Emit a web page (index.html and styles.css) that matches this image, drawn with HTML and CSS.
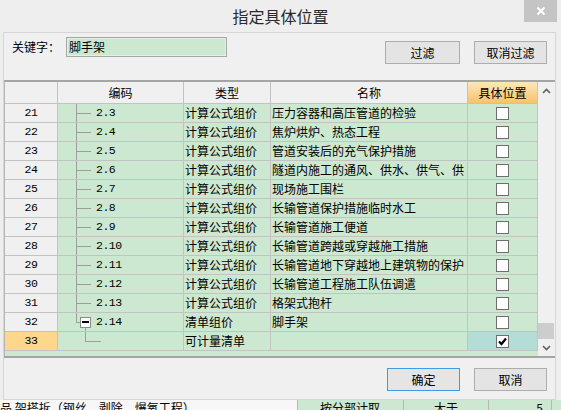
FILE: index.html
```html
<!DOCTYPE html>
<html lang="zh">
<head>
<meta charset="utf-8">
<title>指定具体位置</title>
<link rel="stylesheet" href="styles.css">
</head>
<body>
<div class="window">
  <div class="titlebar">
    <span class="title">指定具体位置</span>
    <span class="close">
      <svg width="10" height="10" viewBox="0 0 10 10"><path d="M1.5 1.5 L8.5 8.5 M8.5 1.5 L1.5 8.5" stroke="#fff" stroke-width="2" fill="none"/></svg>
    </span>
  </div>
  <div class="panel">
    <div class="toolbar">
      <span class="kw-label">关键字：</span>
      <div class="kw-input">脚手架</div>
      <button class="btn btn-filter">过滤</button>
      <button class="btn btn-clear">取消过滤</button>
    </div>
    <div class="grid">
      <div class="table">
        <div class="row head">
          <div class="cell num"></div>
          <div class="cell">编码</div>
          <div class="cell">类型</div>
          <div class="cell">名称</div>
          <div class="cell pos-head">具体位置</div>
        </div>
        <div class="row"><div class="cell num">21</div><div class="cell code tree-mid"><span class="code-text">2.3</span></div><div class="cell type">计算公式组价</div><div class="cell name">压力容器和高压管道的检验</div><div class="cell pos"><span class="chk"></span></div></div>
        <div class="row"><div class="cell num">22</div><div class="cell code tree-mid"><span class="code-text">2.4</span></div><div class="cell type">计算公式组价</div><div class="cell name">焦炉烘炉、热态工程</div><div class="cell pos"><span class="chk"></span></div></div>
        <div class="row"><div class="cell num">23</div><div class="cell code tree-mid"><span class="code-text">2.5</span></div><div class="cell type">计算公式组价</div><div class="cell name">管道安装后的充气保护措施</div><div class="cell pos"><span class="chk"></span></div></div>
        <div class="row"><div class="cell num">24</div><div class="cell code tree-mid"><span class="code-text">2.6</span></div><div class="cell type">计算公式组价</div><div class="cell name">隧道内施工的通风、供水、供气、供</div><div class="cell pos"><span class="chk"></span></div></div>
        <div class="row"><div class="cell num">25</div><div class="cell code tree-mid"><span class="code-text">2.7</span></div><div class="cell type">计算公式组价</div><div class="cell name">现场施工围栏</div><div class="cell pos"><span class="chk"></span></div></div>
        <div class="row"><div class="cell num">26</div><div class="cell code tree-mid"><span class="code-text">2.8</span></div><div class="cell type">计算公式组价</div><div class="cell name">长输管道保护措施临时水工</div><div class="cell pos"><span class="chk"></span></div></div>
        <div class="row"><div class="cell num">27</div><div class="cell code tree-mid"><span class="code-text">2.9</span></div><div class="cell type">计算公式组价</div><div class="cell name">长输管道施工便道</div><div class="cell pos"><span class="chk"></span></div></div>
        <div class="row"><div class="cell num">28</div><div class="cell code tree-mid"><span class="code-text">2.10</span></div><div class="cell type">计算公式组价</div><div class="cell name">长输管道跨越或穿越施工措施</div><div class="cell pos"><span class="chk"></span></div></div>
        <div class="row"><div class="cell num">29</div><div class="cell code tree-mid"><span class="code-text">2.11</span></div><div class="cell type">计算公式组价</div><div class="cell name">长输管道地下穿越地上建筑物的保护</div><div class="cell pos"><span class="chk"></span></div></div>
        <div class="row"><div class="cell num">30</div><div class="cell code tree-mid"><span class="code-text">2.12</span></div><div class="cell type">计算公式组价</div><div class="cell name">长输管道工程施工队伍调遣</div><div class="cell pos"><span class="chk"></span></div></div>
        <div class="row"><div class="cell num">31</div><div class="cell code tree-mid"><span class="code-text">2.13</span></div><div class="cell type">计算公式组价</div><div class="cell name">格架式抱杆</div><div class="cell pos"><span class="chk"></span></div></div>
        <div class="row"><div class="cell num">32</div><div class="cell code tree-last"><span class="toggle"></span><span class="code-text">2.14</span></div><div class="cell type">清单组价</div><div class="cell name">脚手架</div><div class="cell pos"><span class="chk"></span></div></div>
        <div class="row current"><div class="cell num">33</div><div class="cell code tree-child"></div><div class="cell type">可计量清单</div><div class="cell name"></div><div class="cell pos"><span class="chk checked"><svg width="11" height="11" viewBox="0 0 11 11"><path d="M2 5.5 L4.5 8 L9 2.5" stroke="#000" stroke-width="2.2" fill="none"/></svg></span></div></div>
        <div class="filler"></div>
      </div>
      <div class="scrollbar">
        <div class="sb-btn"><svg width="9" height="6" viewBox="0 0 9 6"><path d="M1 5 L4.5 1.5 L8 5" stroke="#606060" stroke-width="1.6" fill="none"/></svg></div>
        <div class="sb-track"></div>
        <div class="sb-thumb"></div>
        <div class="sb-btn"><svg width="9" height="6" viewBox="0 0 9 6"><path d="M1 1 L4.5 4.5 L8 1" stroke="#606060" stroke-width="1.6" fill="none"/></svg></div>
      </div>
    </div>
    <div class="footer">
      <button class="btn btn-ok">确定</button>
      <button class="btn">取消</button>
    </div>
  </div>
</div>
<div class="under">
  <div class="u-cell u1">品 架搭拆（钢丝、剥除、爆氧工程）</div>
  <div class="u-cell u2">按分部计取</div>
  <div class="u-cell u3">大于</div>
  <div class="u-cell u4">5</div>
</div>
</body>
</html>
```
FILE: styles.css
```css
* { box-sizing: border-box; }

body {
  margin: 0;
  width: 561px;
  height: 410px;
  overflow: hidden;
  background: #ffffff;
  font-family: "Noto Sans CJK SC", "Noto Sans", sans-serif;
  font-size: 12px;
  color: #000;
}

.window {
  height: 400px;
  background: #eeeeee;
  display: flex;
  flex-direction: column;
}

.titlebar {
  height: 32px;
  position: relative;
  display: flex;
  align-items: center;
  justify-content: center;
}

.title {
  font-size: 16px;
  color: #2a2a2a;
  line-height: 20px;
}

.close {
  position: absolute;
  top: 0;
  right: 4px;
  width: 33px;
  height: 22px;
  background: #c4c4c4;
  display: flex;
  align-items: center;
  justify-content: center;
}

.panel {
  margin: 0 5px 0 3px;
  height: 368px;
  border: 1px solid #d6d6d6;
  background: #f0f0f0;
  display: flex;
  flex-direction: column;
}

.toolbar {
  height: 47px;
  flex: none;
  display: flex;
  align-items: flex-start;
  padding: 4px 8px 0 8px;
}

.kw-label {
  width: 54px;
  line-height: 20px;
}

.kw-input {
  width: 161px;
  height: 20px;
  border: 1px solid #a6a6a6;
  background: #cde8d0;
  line-height: 18px;
  padding-left: 2px;
  box-shadow: inset 0 0 0 1px #e4efe5;
}

.btn {
  font-family: "Noto Sans CJK SC", sans-serif;
  font-size: 12px;
  color: #000;
  height: 23px;
  width: 73px;
  padding: 0;
  border: 1px solid #adadad;
  background: #e4e4e4;
  line-height: 20px;
}

.btn-filter {
  margin-left: auto;
  margin-top: 4px;
  width: 75px;
}

.btn-clear {
  margin-left: 14px;
  margin-top: 4px;
}

.grid {
  height: 278px;
  flex: none;
  display: flex;
  border-top: 2px solid #a5a5a5;
  border-bottom: 2px solid #a5a5a5;
  border-left: 1px solid #b5b5b5;
}

.table {
  width: 533px;
  display: flex;
  flex-direction: column;
}

.row {
  display: grid;
  grid-template-columns: 53px 126px 87px 197px 70px;
  height: 19px;
}

.row.head {
  height: 22px;
}

.cell {
  border-right: 1px solid #c3c3c3;
  border-bottom: 1px solid #c3c3c3;
  background: #cde8d0;
  line-height: 18px;
  white-space: nowrap;
  overflow: hidden;
}

.head .cell {
  background: #f0f0f0;
  text-align: center;
  line-height: 21px;
}

.head .pos-head {
  background: linear-gradient(#fde8b8, #f5c36c);
}

.cell.num {
  background: #f0f0f0;
  text-align: center;
  font-family: "Liberation Mono", monospace;
  font-size: 11.5px;
  letter-spacing: -0.4px;
}

.current .cell.num {
  background: #fed68c;
}

.current .cell.pos {
  background: #b5ddd8;
}

.cell.type {
  padding-left: 1px;
}

.cell.name {
  padding-left: 1px;
}

.cell.code {
  display: flex;
  align-items: center;
}

.code-text {
  font-family: "Liberation Mono", monospace;
  font-size: 11.5px;
  letter-spacing: -0.5px;
  margin-left: 38px;
  line-height: 18px;
}

.tree-mid {
  background:
    linear-gradient(#9e9e9e, #9e9e9e) 18px 0 / 1px 100% no-repeat,
    linear-gradient(#9e9e9e, #9e9e9e) 18px 9px / 15px 1px no-repeat,
    #cde8d0;
}

.tree-last {
  background:
    linear-gradient(#9e9e9e, #9e9e9e) 18px 0 / 1px 9px no-repeat,
    linear-gradient(#9e9e9e, #9e9e9e) 18px 9px / 4px 1px no-repeat,
    linear-gradient(#9e9e9e, #9e9e9e) 27px 12px / 1px 7px no-repeat,
    #cde8d0;
}

.tree-last .code-text {
  margin-left: 5px;
}

.toggle {
  width: 11px;
  height: 11px;
  margin-left: 22px;
  border: 1px solid #8c8c8c;
  background: linear-gradient(#000, #000) center / 7px 2px no-repeat, #fff;
}

.tree-child {
  background:
    linear-gradient(#9e9e9e, #9e9e9e) 27px 0 / 1px 9px no-repeat,
    linear-gradient(#9e9e9e, #9e9e9e) 27px 9px / 16px 1px no-repeat,
    #cde8d0;
}

.cell.pos {
  display: flex;
  align-items: center;
  justify-content: center;
}

.chk {
  width: 13px;
  height: 13px;
  border: 1px solid #6e6e6e;
  background: #fff;
  display: flex;
  align-items: center;
  justify-content: center;
}

.filler {
  flex: 1;
  background: #cde8d0;
}

.scrollbar {
  width: 17px;
  background: #f0f0f0;
  display: flex;
  flex-direction: column;
}

.sb-btn {
  height: 17px;
  display: flex;
  align-items: center;
  justify-content: center;
}

.sb-track {
  flex: 1;
}

.sb-thumb {
  height: 16px;
  margin: 0 1px 0 0;
  background: #cdcdcd;
}

.footer {
  flex: 1;
  display: flex;
  justify-content: flex-end;
  align-items: flex-start;
  padding: 10px 8px 0 0;
  gap: 14px;
}

.btn-ok {
  border-color: #3d9be9;
  background: #e5e5e5;
}

.under {
  height: 10px;
  overflow: hidden;
  display: flex;
  background: #cde8d0;
}

.u-cell {
  border-right: 1px solid #b8b8b8;
  line-height: 14px;
  padding-top: 1px;
  white-space: nowrap;
  overflow: hidden;
}

.u1 { width: 298px; background: #f7f7f7; }
.u2 { width: 106px; padding-left: 22px; }
.u3 { width: 85px; padding-left: 30px; }
.u4 { width: 63px; text-align: right; padding-right: 8px; }
```
